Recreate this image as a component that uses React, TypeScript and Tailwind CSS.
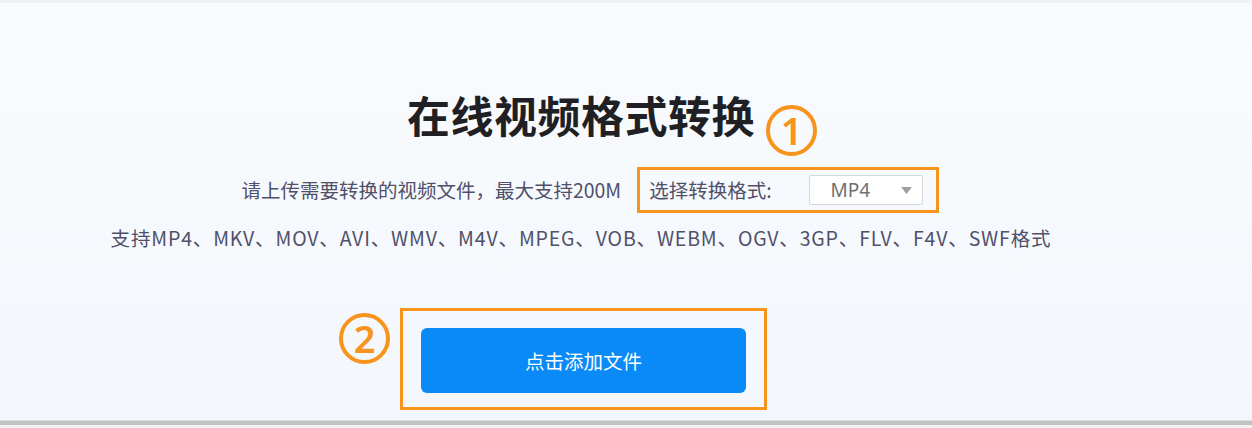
import React from "react";

const cjk = { fontFamily: '"Noto Sans CJK SC", "Noto Sans", sans-serif' };

function Circled({ n }: { n: string }) {
  return (
    <div className="flex h-[51px] w-[51px] items-center justify-center rounded-full border-[4px] border-[#f7941d] text-[38px] font-semibold leading-none text-[#f7941d]" style={{ fontFamily: '"Noto Sans", sans-serif' }}>
      <span className="-mt-[2px]">{n}</span>
    </div>
  );
}

export default function App() {
  return (
    <div className="flex h-[428px] w-full flex-col bg-gradient-to-b from-[#f9fbfd] to-[#f3f7fc]" style={cjk}>
      <div className="h-[3px] w-full bg-[#f1f2f4]" />
      <div className="flex flex-1 flex-col">
        <div className="flex w-[1162px] flex-col items-center">
          <div className="relative mt-[87px]">
            <h1 className="text-[43px] font-bold leading-[48px] tracking-[0.5px] text-[#1f1f24]">在线视频格式转换</h1>
            <div className="absolute left-[calc(100%+11px)] top-[15px]">
              <Circled n="1" />
            </div>
          </div>
          <div className="ml-[18px] mt-[29px] flex items-center text-[19.5px] text-[#50506a]">
            <span className="leading-[24px]">请上传需要转换的视频文件，最大支持200M</span>
            <div className="ml-[16px] flex h-[46px] items-center border-[3px] border-[#f7941d] pl-[9px] pr-[13px]">
              <span className="leading-[24px]">选择转换格式:</span>
              <div className="ml-[37px] flex h-[30px] w-[114px] items-center rounded-[2px] border border-[#d6d8dc] bg-white pl-[21px] pr-[10px]">
                <span className="text-[19px] leading-none text-[#707070]" style={{ fontFamily: '"Noto Sans", sans-serif' }}>MP4</span>
                <svg className="ml-auto" width="11" height="7" viewBox="0 0 11 7"><path d="M0 0h11L5.5 7z" fill="#a0a0a0" /></svg>
              </div>
            </div>
          </div>
          <div className="mt-[13px] text-[19.5px] leading-[24px] tracking-[0.85px] text-[#50506a]">
            支持MP4、MKV、MOV、AVI、WMV、M4V、MPEG、VOB、WEBM、OGV、3GP、FLV、F4V、SWF格式
          </div>
          <div className="relative mt-[58px] ml-[5px]">
            <div className="absolute right-[calc(100%+10px)] top-[5px]">
              <Circled n="2" />
            </div>
            <div className="flex h-[102px] w-[367px] items-center justify-center border-[3px] border-[#f7941d]">
              <div className="mt-[3px] flex h-[65px] w-[325px] items-center justify-center rounded-[6px] bg-[#0a8af7] text-[19.5px] text-white">
                点击添加文件
              </div>
            </div>
          </div>
        </div>
      </div>
      <div className="h-[1px] w-full bg-[#dedede]" />
      <div className="h-[4px] w-full bg-[#c2c2c2]" />
      <div className="h-[3px] w-full bg-[#f2f2f2]" />
    </div>
  );
}
